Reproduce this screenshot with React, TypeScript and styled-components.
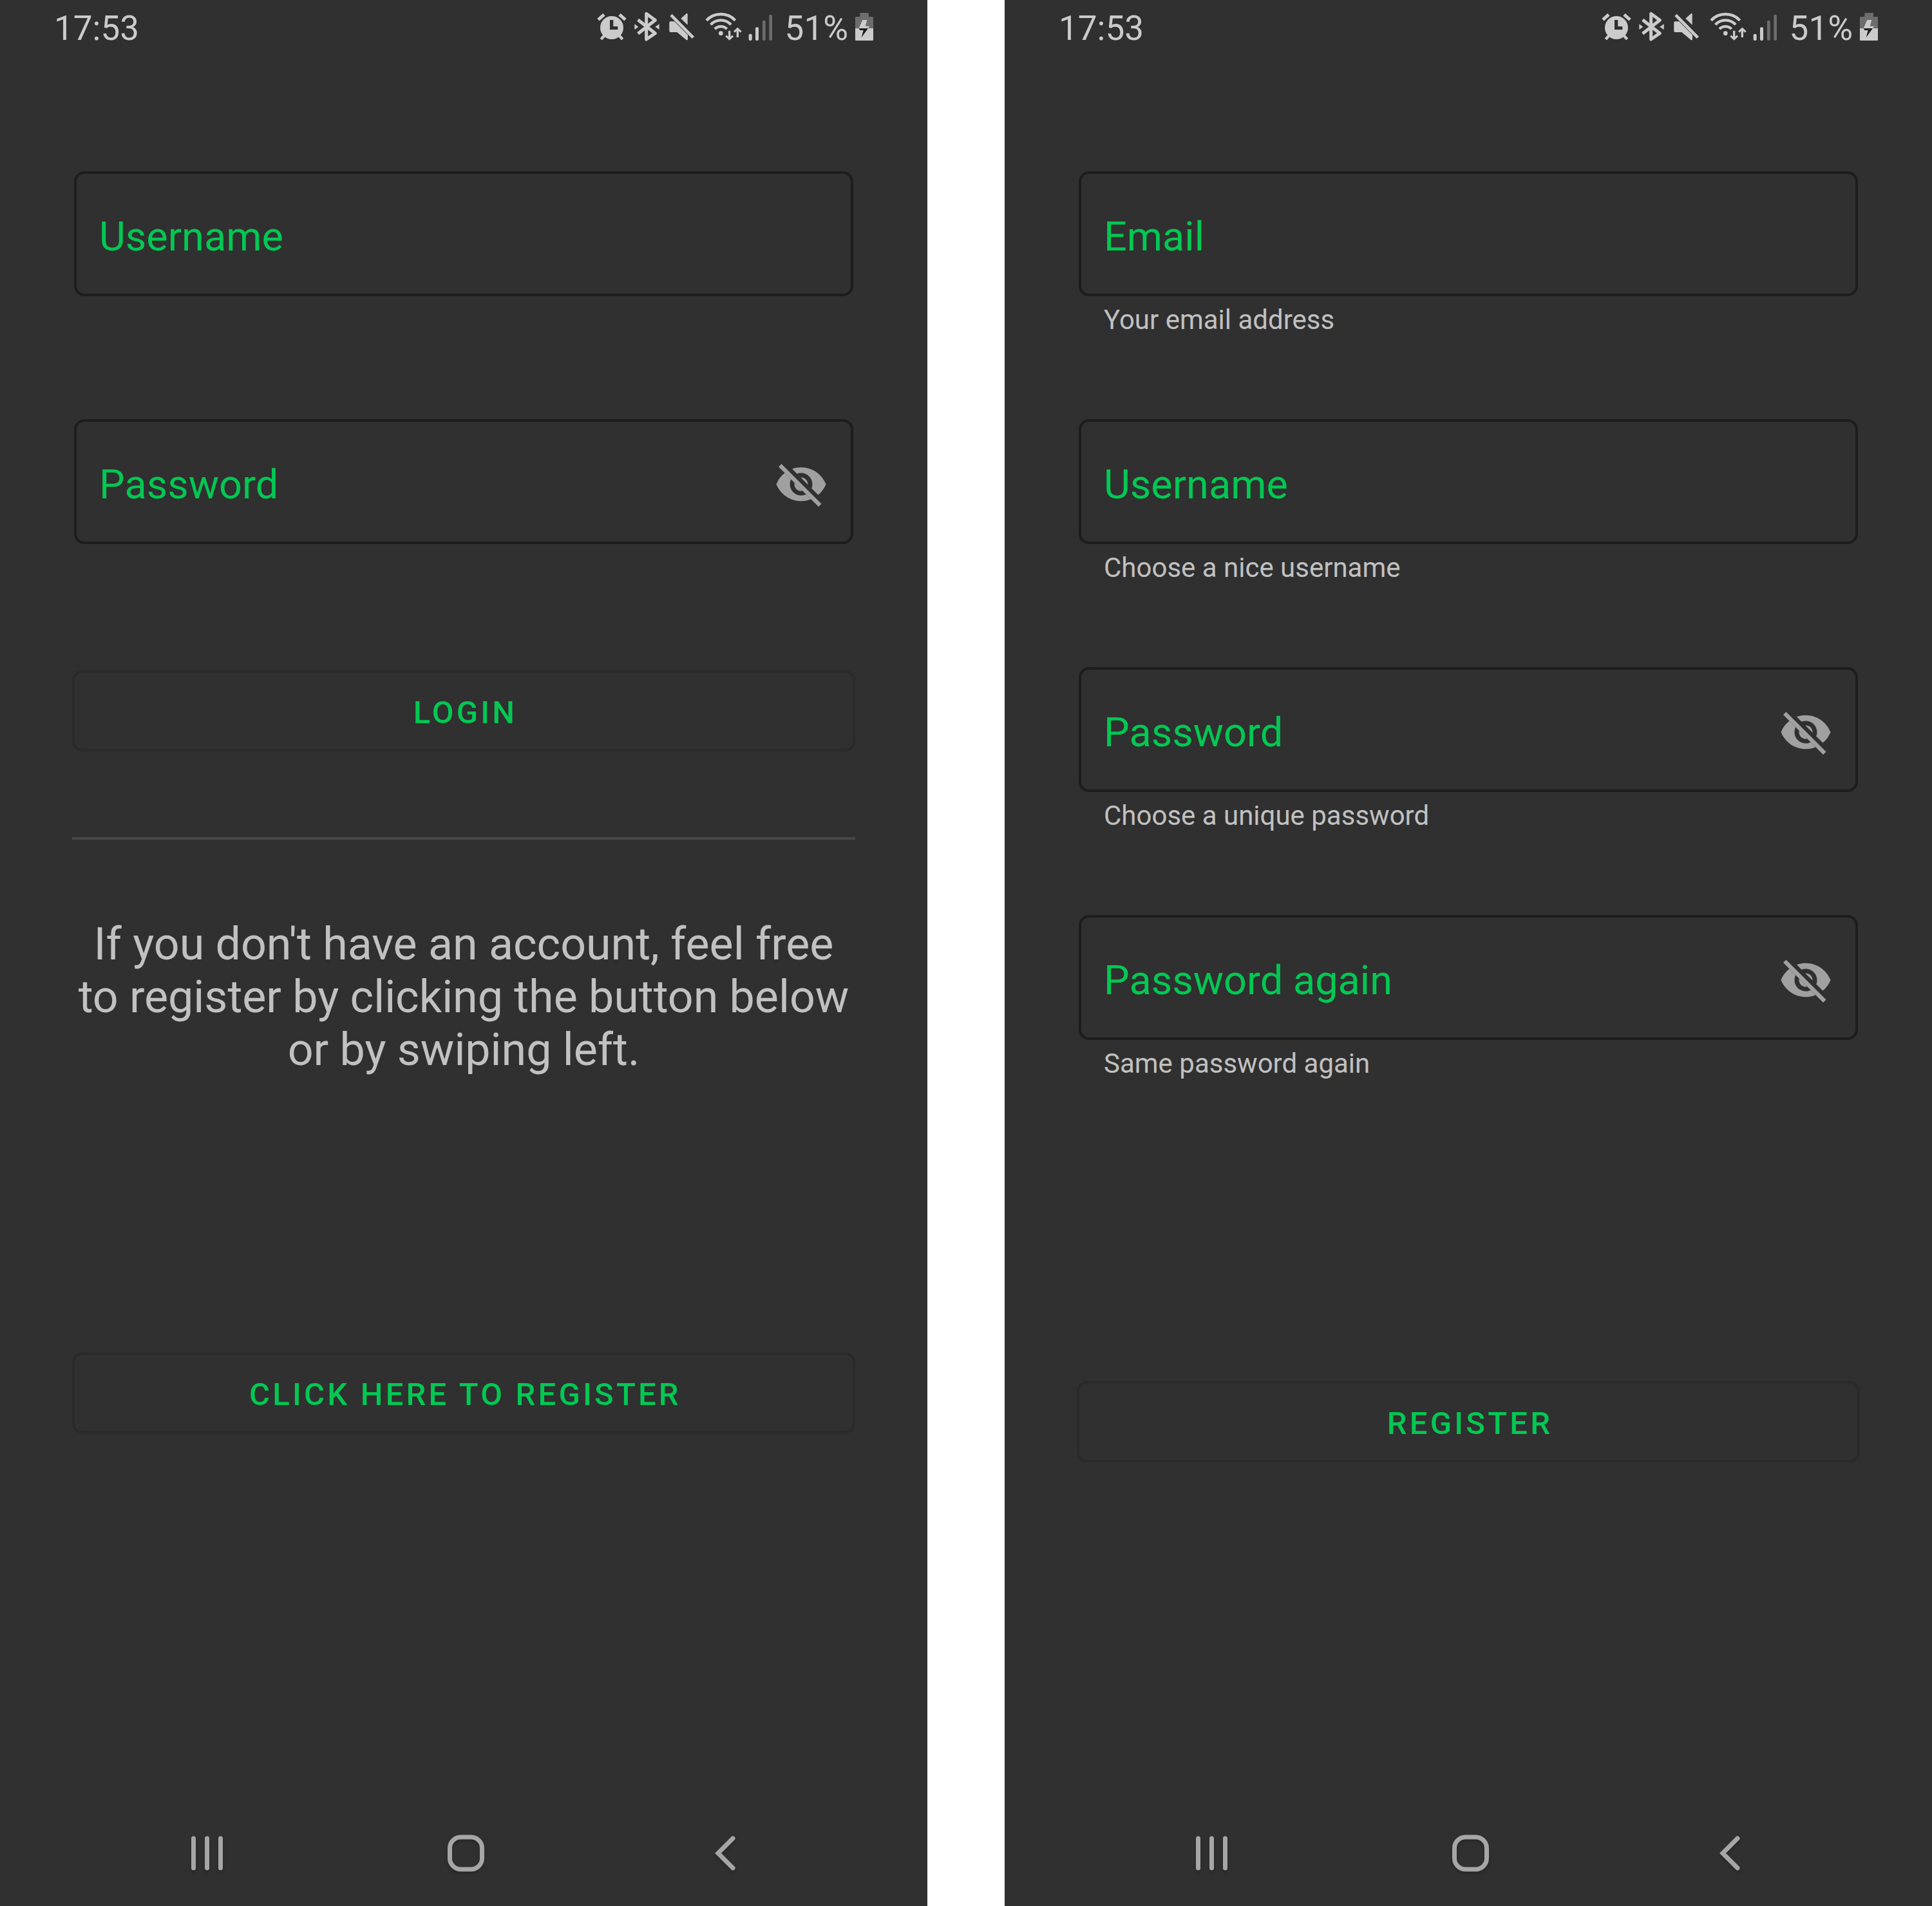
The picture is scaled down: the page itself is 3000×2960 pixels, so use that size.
import React from "react";
import styled, { createGlobalStyle } from "styled-components";

const GlobalStyle = createGlobalStyle`
  body {
    margin: 0;
    background: #ffffff;
    font-family: Roboto, "Liberation Sans", sans-serif;
  }
  *, *::before, *::after { box-sizing: border-box; }
`;

const Page = styled.div`
  display: flex;
  justify-content: space-between;
  width: 3000px;
  height: 2960px;
`;

const Phone = styled.main`
  display: flex;
  flex-direction: column;
  width: 1440px;
  height: 2960px;
  background: #303030;
`;

const StatusBar = styled.header`
  display: flex;
  justify-content: space-between;
  height: 88px;
  padding: 0 83px 0 84px;
  color: #cbcbcb;
  font-size: 53px;
  line-height: 88px;
`;

const StatusIcons = styled.div`
  display: flex;
  svg { display: block; margin-top: 18px; }
`;

const Gap = styled.span<{ $w: number }>`
  width: ${(p) => p.$w}px;
`;

const Percent = styled.span`
  width: 125px;
  padding-right: 10px;
  text-align: right;
`;

const Content = styled.section`
  display: flex;
  flex-direction: column;
  flex: 1;
  padding: 178px 112px 0;
`;

const Field = styled.div`
  height: 385px;
  padding: 0 3px;
`;

const Outline = styled.div`
  display: flex;
  align-items: center;
  justify-content: space-between;
  height: 194px;
  padding: 8px 35px 0;
  border: 4px solid #1d1d1d;
  border-radius: 16px;
  svg { display: block; }
`;

const Label = styled.label`
  margin-top: 2px;
  color: #03c853;
  font-size: 63px;
  line-height: 74px;
`;

const Helper = styled.p`
  margin: 11px 0 0 39px;
  color: #c1c1c1;
  font-size: 42px;
  line-height: 52px;
`;

const Button = styled.button<{ $top: number }>`
  flex: none;
  height: 126px;
  margin: ${(p) => p.$top}px 0 0;
  padding: 5px 0 0 5px;
  border: 4px solid #2a2a2a;
  border-radius: 15px;
  background: transparent;
  color: #03c853;
  font-family: inherit;
  font-size: 49px;
  font-weight: 500;
  letter-spacing: 4.2px;
  line-height: 58px;
  text-transform: uppercase;
`;

const Divider = styled.hr`
  width: 100%;
  height: 4px;
  margin: 133px 0 121px;
  border: 0;
  background: #474747;
`;

const Message = styled.p`
  margin: 0;
  color: #c1c1c1;
  font-size: 70px;
  letter-spacing: -0.05px;
  line-height: 82px;
  text-align: center;
`;

const NavBar = styled.nav`
  display: flex;
  align-items: center;
  justify-content: space-between;
  height: 168px;
  padding: 4px 294px 0 292px;
  svg { display: block; filter: drop-shadow(0 3px 2px rgba(0, 0, 0, 0.2)); }
`;

const AlarmIcon = () => (
  <svg width="48" height="46" viewBox="48 54 144 138" fill="none" stroke="#cbcbcb">
    <circle cx="120" cy="129" r="54" fill="#cbcbcb" stroke="none" />
    <path d="M111 93H127V123H148V138H111Z" fill="#303030" stroke="none" />
    <path d="M57 92 84 68M156 68 183 92" strokeWidth="15" />
    <path d="M86 165 70 183M154 165 170 183" strokeWidth="13" />
  </svg>
);

const BluetoothIcon = () => (
  <svg width="42" height="46" viewBox="222 54 126 138" fill="none" stroke="#cbcbcb">
    <path d="M242 92 322 155 281 183V64L322 94 242 157" strokeWidth="15" strokeLinejoin="round" />
    <path d="M226 112 244 125 226 138ZM341 112 322 125 341 138Z" fill="#cbcbcb" stroke="none" />
  </svg>
);

const MuteIcon = () => (
  <svg width="42" height="46" viewBox="384 54 126 138" fill="#cbcbcb">
    <path d="M388 105Q388 100 393 100H412L474 163V183Q473 189 466 185L424 150H393Q388 150 388 145Z" />
    <path d="M442 86 465 65Q473 59 473 67V116Z" />
    <path d="M396 70 499 175" stroke="#cbcbcb" strokeWidth="14" />
  </svg>
);

const WifiIcon = () => (
  <svg width="60" height="46" viewBox="552 54 180 138" fill="none" stroke="#cbcbcb">
    <path d="M561 95A92 92 0 0 1 695 95M581 115A63 63 0 0 1 675 115M600 135A39 39 0 0 1 656 135" strokeWidth="13" />
    <circle cx="628" cy="155" r="10" fill="#cbcbcb" stroke="none" />
    <path d="M668 143V180M706 174V136" strokeWidth="10" />
    <path d="M652 167 668 182 684 167M690 149 706 134 722 149" strokeWidth="9" />
  </svg>
);

const SignalIcon = () => (
  <svg width="40" height="46" viewBox="36 54 120 138" fill="#cbcbcb">
    <rect x="38" y="158" width="15" height="31" rx="6" />
    <rect x="69" y="127" width="15" height="62" rx="6" />
    <rect x="102" y="95" width="14" height="94" rx="6" fill="#6d6d6d" />
    <rect x="133" y="68" width="14" height="121" rx="6" fill="#6d6d6d" />
  </svg>
);

const BatteryIcon = () => (
  <svg width="30" height="46" viewBox="531 54 90 138">
    <path d="M556 63Q556 60 559 60H594Q597 60 597 63V78H614Q618 78 618 82V132H534V82Q534 78 538 78H556Z" fill="#6d6d6d" />
    <path d="M534 132H618V185Q618 189 614 189H538Q534 189 534 185Z" fill="#cbcbcb" />
    <path d="M568 93H589L581 122H601L594 132H551Z" fill="#cbcbcb" />
    <path d="M551 132H594L563 175 572 141H556Z" fill="#1c1c1c" />
  </svg>
);

const HiddenEyeIcon = () => (
  <svg width="84" height="84" viewBox="0 0 24 24" fill="#a0a0a0">
    <clipPath id="eye-gap">
      <path d="M0 2.27 19.73 22 22.27 19.46 4.54 1.73V0H24V24H0Z" />
    </clipPath>
    <path
      clipPath="url(#eye-gap)"
      d="M12 4.5C7 4.5 2.73 7.61 1 12c1.73 4.39 6 7.5 11 7.5s9.27-3.11 11-7.5c-1.73-4.39-6-7.5-11-7.5zM12 17c-2.76 0-5-2.24-5-5s2.24-5 5-5 5 2.24 5 5-2.24 5-5 5zm0-8c-1.66 0-3 1.34-3 3s1.34 3 3 3 3-1.34 3-3-1.34-3-3-3z"
    />
    <path d="M2 4.27 3.27 3 21 20.73 19.73 22Z" />
  </svg>
);

const RecentsIcon = () => (
  <svg width="60" height="60" viewBox="0 0 60 60" stroke="#a6a6a6" strokeWidth="7" strokeLinecap="round">
    <path d="M8.5 7V53M29.5 7V53M50.5 7V53" />
  </svg>
);

const HomeIcon = () => (
  <svg width="60" height="60" viewBox="0 0 60 60" fill="none" stroke="#a6a6a6" strokeWidth="7">
    <rect x="4.5" y="5" width="50" height="50" rx="17" />
  </svg>
);

const BackIcon = () => (
  <svg width="50" height="60" viewBox="0 0 50 60" fill="none" stroke="#a6a6a6" strokeWidth="7" strokeLinecap="round">
    <path d="M42 7 19 30 42 53" />
  </svg>
);

type InputFieldProps = { label: string; helper?: string; secret?: boolean };

const InputField = ({ label, helper, secret }: InputFieldProps) => (
  <Field>
    <Outline>
      <Label>{label}</Label>
      {secret && <HiddenEyeIcon />}
    </Outline>
    {helper && <Helper>{helper}</Helper>}
  </Field>
);

const Screen = ({ children }: { children: React.ReactNode }) => (
  <Phone>
    <StatusBar>
      <span>17:53</span>
      <StatusIcons>
        <AlarmIcon />
        <Gap $w={10} />
        <BluetoothIcon />
        <Gap $w={12} />
        <MuteIcon />
        <Gap $w={14} />
        <WifiIcon />
        <Gap $w={8} />
        <SignalIcon />
        <Percent>51%</Percent>
        <BatteryIcon />
      </StatusIcons>
    </StatusBar>
    <Content>{children}</Content>
    <NavBar>
      <RecentsIcon />
      <HomeIcon />
      <BackIcon />
    </NavBar>
  </Phone>
);

export default function App() {
  return (
    <>
      <GlobalStyle />
      <Page>
        <Screen>
          <InputField label="Username" />
          <InputField label="Password" secret />
          <Button $top={5}>Login</Button>
          <Divider />
          <Message>
            If you don't have an account, feel free
            <br />
            to register by clicking the button below
            <br />
            or by swiping left.
          </Message>
          <Button $top={429}>Click here to register</Button>
        </Screen>
        <Screen>
          <InputField label="Email" helper="Your email address" />
          <InputField label="Username" helper="Choose a nice username" />
          <InputField label="Password" helper="Choose a unique password" secret />
          <InputField label="Password again" helper="Same password again" secret />
          <Button $top={339}>Register</Button>
        </Screen>
      </Page>
    </>
  );
}
